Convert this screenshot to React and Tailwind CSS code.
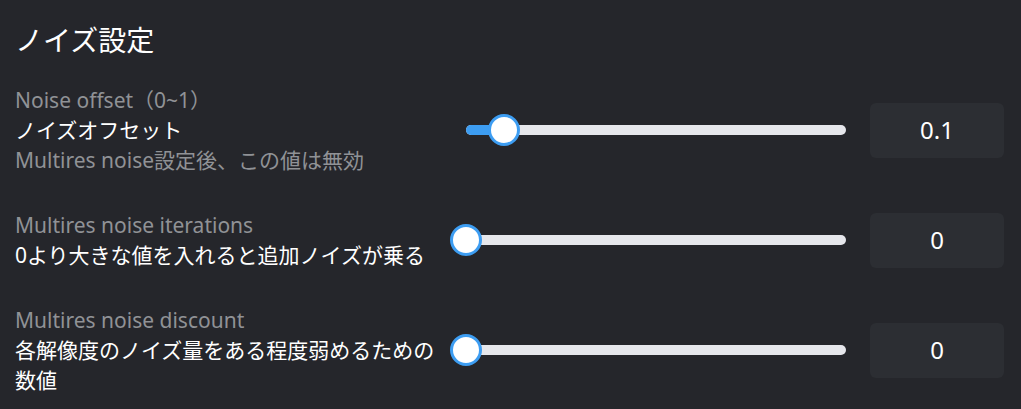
const rows = [
  {
    label: 'Noise offset（0~1）',
    lines: ['ノイズオフセット'],
    note: 'Multires noise設定後、この値は無効',
    value: 0.1,
  },
  {
    label: 'Multires noise iterations',
    lines: ['0より大きな値を入れると追加ノイズが乗る'],
    value: 0,
  },
  {
    label: 'Multires noise discount',
    lines: ['各解像度のノイズ量をある程度弱めるための', '数値'],
    value: 0,
  },
];

function Slider({ value }) {
  const pct = `${value * 100}%`;
  return (
    <div className="relative h-[10px] w-full rounded-full bg-[#e6e7ec]">
      <div className="absolute left-0 top-0 h-full rounded-full bg-[#3d9df2]" style={{ width: pct }} />
      <div
        className="absolute top-1/2 h-[32px] w-[32px] -translate-x-1/2 -translate-y-1/2 rounded-full border-[3px] border-[#3d9df2] bg-white"
        style={{ left: pct }}
      />
    </div>
  );
}

export default function App() {
  return (
    <div
      className="min-h-[409px] w-[1021px] bg-[#25262b] pl-[15px] pr-[17px] pt-[20px] text-[21px] leading-[30px]"
      style={{ fontFamily: '"Noto Sans", "Noto Sans CJK JP", sans-serif' }}
    >
      <h2 className="text-[28px] leading-[40px] text-white">ノイズ設定</h2>

      <div className="mt-[25px] flex flex-col gap-[35px]">
        {rows.map((row) => (
          <div key={row.label} className="flex items-center">
            <div className="w-[430px] shrink-0">
              <div className="text-[#909296]">{row.label}</div>
              {row.lines.map((l) => (
                <div key={l} className="text-white">{l}</div>
              ))}
              {row.note && <div className="text-[#909296]">{row.note}</div>}
            </div>
            <div className="ml-[21px] w-[380px]">
              <Slider value={row.value} />
            </div>
            <div className="ml-[24px] flex h-[55px] w-[134px] items-center justify-center rounded-md bg-[#2c2e33] text-[24px] text-white">
              {row.value}
            </div>
          </div>
        ))}
      </div>
    </div>
  );
}
